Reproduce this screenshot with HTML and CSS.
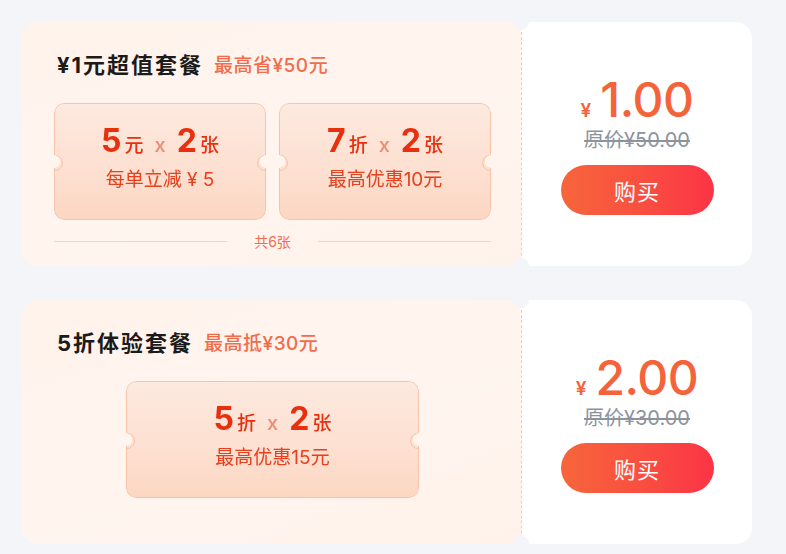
FILE: index.html
```html
<!DOCTYPE html>
<html lang="zh-CN">
<head>
<meta charset="utf-8">
<link rel="stylesheet" href="styles.css">
</head>
<body>
<div class="list">
  <div class="card">
    <div class="main">
      <div class="head">
        <span class="title">¥1元超值套餐</span>
        <span class="sub">最高省¥50元</span>
      </div>
      <div class="coupons">
        <div class="coupon">
          <div class="c-top"><span class="num">5</span><span class="unit">元</span><span class="x">x</span><span class="num">2</span><span class="unit">张</span></div>
          <div class="c-desc">每单立减 ¥ 5</div>
        </div>
        <div class="coupon">
          <div class="c-top"><span class="num">7</span><span class="unit">折</span><span class="x">x</span><span class="num">2</span><span class="unit">张</span></div>
          <div class="c-desc">最高优惠10元</div>
        </div>
      </div>
      <div class="total"><span class="rule"></span><span class="total-text">共6张</span><span class="rule"></span></div>
    </div>
    <div class="side">
      <div class="price"><span class="yen">¥</span><span class="amount">1.00</span></div>
      <div class="orig">原价¥50.00</div>
      <button class="buy">购买</button>
    </div>
  </div>

  <div class="card">
    <div class="main">
      <div class="head">
        <span class="title">5折体验套餐</span>
        <span class="sub">最高抵¥30元</span>
      </div>
      <div class="coupons single">
        <div class="coupon wide">
          <div class="c-top"><span class="num">5</span><span class="unit">折</span><span class="x">x</span><span class="num">2</span><span class="unit">张</span></div>
          <div class="c-desc">最高优惠15元</div>
        </div>
      </div>
    </div>
    <div class="side">
      <div class="price"><span class="yen">¥</span><span class="amount">2.00</span></div>
      <div class="orig">原价¥30.00</div>
      <button class="buy">购买</button>
    </div>
  </div>
</div>
</body>
</html>
```

FILE: styles.css
```css
* { box-sizing: border-box; }
html, body { margin: 0; padding: 0; }
body {
  background: #f3f5f9;
  font-family: "Inter", "Noto Sans CJK SC", sans-serif;
  width: 786px;
  height: 554px;
  overflow: hidden;
}
.list {
  padding: 22px 0 0 22px;
  display: flex;
  flex-direction: column;
  gap: 34px;
}
.card {
  position: relative;
  display: flex;
  width: 730px;
  height: 244px;
}
.card::before, .card::after {
  content: "";
  position: absolute;
  left: 491px;
  width: 16px;
  height: 16px;
  border-radius: 50%;
  background: #f3f5f9;
}
.card::before { top: -8px; }
.card::after { bottom: -8px; }
.main {
  width: 499px;
  background: linear-gradient(160deg, #fff3ec 0%, #fff5ef 60%, #fff2ea 100%);
  border-radius: 16px 4px 4px 16px;
  padding: 27px 30px 0 32px;
}
.head {
  display: flex;
  align-items: center;
  height: 28px;
  padding-left: 3px;
}
.title {
  font-size: 22px;
  font-weight: 700;
  color: #1b1b1b;
  letter-spacing: 2px;
}
.sub {
  margin-left: 11px;
  font-size: 19px;
  font-weight: 500;
  color: #f26c4c;
  letter-spacing: 0.5px;
}
.coupons {
  display: flex;
  gap: 13px;
  margin-top: 26px;
}
.coupons.single { justify-content: center; }
.coupon {
  position: relative;
  flex: 1;
  height: 117px;
  border-radius: 10px;
  border: 1px solid #f7c4aa;
  background: linear-gradient(180deg, #fde9df 0%, #fddfcf 65%, #fcd6c2 100%);
  display: flex;
  flex-direction: column;
  align-items: center;
  padding-top: 17px;
  -webkit-mask: radial-gradient(circle at 0 50%, transparent 6px, #000 6.5px) left / 51% 100% no-repeat,
                radial-gradient(circle at 100% 50%, transparent 6px, #000 6.5px) right / 51% 100% no-repeat;
  mask: radial-gradient(circle at 0 50%, transparent 6px, #000 6.5px) left / 51% 100% no-repeat,
        radial-gradient(circle at 100% 50%, transparent 6px, #000 6.5px) right / 51% 100% no-repeat;
}
.coupon::before, .coupon::after {
  content: "";
  position: absolute;
  top: calc(50% - 7px);
  width: 14px;
  height: 14px;
  border-radius: 50%;
  border: 1px solid #f7c4aa;
}
.coupon::before { left: -8px; }
.coupon::after { right: -8px; }
.coupon.wide { flex: 0 0 293px; }
.c-top {
  height: 40px;
  line-height: 40px;
  color: #e8300f;
  display: flex;
  align-items: baseline;
}
.num {
  font-size: 32px;
  font-weight: 700;
}
.unit {
  font-size: 19px;
  font-weight: 500;
  margin-left: 3px;
}
.x {
  font-size: 20px;
  font-weight: 500;
  color: #f08a70;
  margin: 0 11px;
}
.c-desc {
  margin-top: 6px;
  line-height: 26px;
  font-size: 19px;
  color: #e6401f;
}
.total {
  display: flex;
  align-items: center;
  margin-top: 11px;
  height: 20px;
}
.rule {
  flex: 1;
  height: 1px;
  background: #f6d3c3;
}
.total-text {
  font-size: 14px;
  color: #f06e4f;
  padding: 0 27px;
}
.side {
  width: 231px;
  background: #fff;
  border-left: 1px dashed #e2cfc9;
  border-radius: 4px 16px 16px 4px;
  display: flex;
  flex-direction: column;
  align-items: center;
  justify-content: center;
  padding-top: 2px;
}
.price {
  display: flex;
  align-items: baseline;
  color: #f5633b;
  line-height: 50px;
  height: 50px;
}
.yen {
  font-size: 19px;
  font-weight: 600;
  margin-right: 9px;
}
.amount {
  font-size: 48px;
  font-weight: 500;
  letter-spacing: -0.5px;
}
.orig {
  font-size: 20px;
  color: #8d939c;
  text-decoration: line-through;
  line-height: 26px;
  margin-top: 2px;
}
.buy {
  margin-top: 12px;
  width: 153px;
  height: 50px;
  border: none;
  border-radius: 25px;
  background: linear-gradient(90deg, #f7653b 0%, #f95040 50%, #fb3446 100%);
  color: #fff;
  font-family: "Inter", "Noto Sans CJK SC", sans-serif;
  font-size: 22px;
  letter-spacing: 1px;
  padding: 0;
}
```
